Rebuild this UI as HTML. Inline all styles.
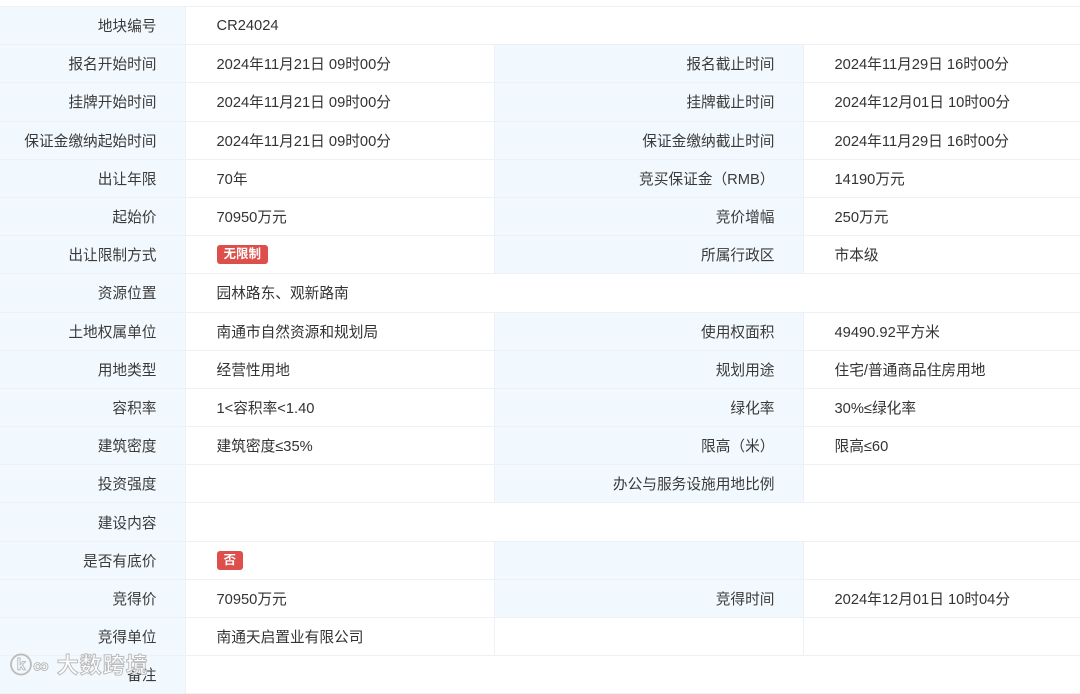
<!DOCTYPE html>
<html><head><meta charset="utf-8"><style>
html,body{margin:0;padding:0;background:#fff;width:1080px;height:683px;overflow:hidden;font-family:"Liberation Sans","Noto Sans CJK SC",sans-serif;font-size:14.7px;color:#333}
table{position:absolute;top:6px;left:0;border-collapse:collapse;width:1080px;table-layout:fixed}
tr{height:38.2px}
td{padding:0;border:1px solid #edf0f4;vertical-align:middle;white-space:nowrap;box-sizing:border-box}
td.l{background:#f2f9fe;text-align:right;padding-right:28px;color:#3a3a3a}
td.v{padding-left:31px;background:#fff}
tr td:first-child{border-left:none}
.b{display:inline-block;background:#dc4f4a;color:#fff;font-weight:bold;font-size:12.5px;line-height:19px;padding:0 7px;border-radius:3px}
.wm{position:absolute;left:10px;top:648px;font-size:22px;font-weight:bold;color:rgba(255,255,255,0.85);-webkit-text-stroke:1px #bbb;letter-spacing:1px}
</style></head><body>
<table>
<colgroup><col style="width:185px"><col style="width:309px"><col style="width:309px"><col style="width:277px"></colgroup>
<tr><td class="l">地块编号</td><td class="v" colspan="3">CR24024</td></tr>
<tr><td class="l">报名开始时间</td><td class="v">2024年11月21日 09时00分</td><td class="l">报名截止时间</td><td class="v">2024年11月29日 16时00分</td></tr>
<tr><td class="l">挂牌开始时间</td><td class="v">2024年11月21日 09时00分</td><td class="l">挂牌截止时间</td><td class="v">2024年12月01日 10时00分</td></tr>
<tr><td class="l">保证金缴纳起始时间</td><td class="v">2024年11月21日 09时00分</td><td class="l">保证金缴纳截止时间</td><td class="v">2024年11月29日 16时00分</td></tr>
<tr><td class="l">出让年限</td><td class="v">70年</td><td class="l">竞买保证金（RMB）</td><td class="v">14190万元</td></tr>
<tr><td class="l">起始价</td><td class="v">70950万元</td><td class="l">竞价增幅</td><td class="v">250万元</td></tr>
<tr><td class="l">出让限制方式</td><td class="v"><span class="b">无限制</span></td><td class="l">所属行政区</td><td class="v">市本级</td></tr>
<tr><td class="l">资源位置</td><td class="v" colspan="3">园林路东、观新路南</td></tr>
<tr><td class="l">土地权属单位</td><td class="v">南通市自然资源和规划局</td><td class="l">使用权面积</td><td class="v">49490.92平方米</td></tr>
<tr><td class="l">用地类型</td><td class="v">经营性用地</td><td class="l">规划用途</td><td class="v">住宅/普通商品住房用地</td></tr>
<tr><td class="l">容积率</td><td class="v">1&lt;容积率&lt;1.40</td><td class="l">绿化率</td><td class="v">30%≤绿化率</td></tr>
<tr><td class="l">建筑密度</td><td class="v">建筑密度≤35%</td><td class="l">限高（米）</td><td class="v">限高≤60</td></tr>
<tr><td class="l">投资强度</td><td class="v"></td><td class="l">办公与服务设施用地比例</td><td class="v"></td></tr>
<tr><td class="l">建设内容</td><td class="v" colspan="3"></td></tr>
<tr><td class="l">是否有底价</td><td class="v"><span class="b">否</span></td><td class="l"></td><td class="v"></td></tr>
<tr><td class="l">竞得价</td><td class="v">70950万元</td><td class="l">竞得时间</td><td class="v">2024年12月01日 10时04分</td></tr>
<tr><td class="l">竞得单位</td><td class="v">南通天启置业有限公司</td><td class="v"></td><td class="v"></td></tr>
<tr><td class="l">备注</td><td class="v" colspan="3"></td></tr>
</table>
<div class="wm">ⓚ∞ 大数跨境</div>
</body></html>
